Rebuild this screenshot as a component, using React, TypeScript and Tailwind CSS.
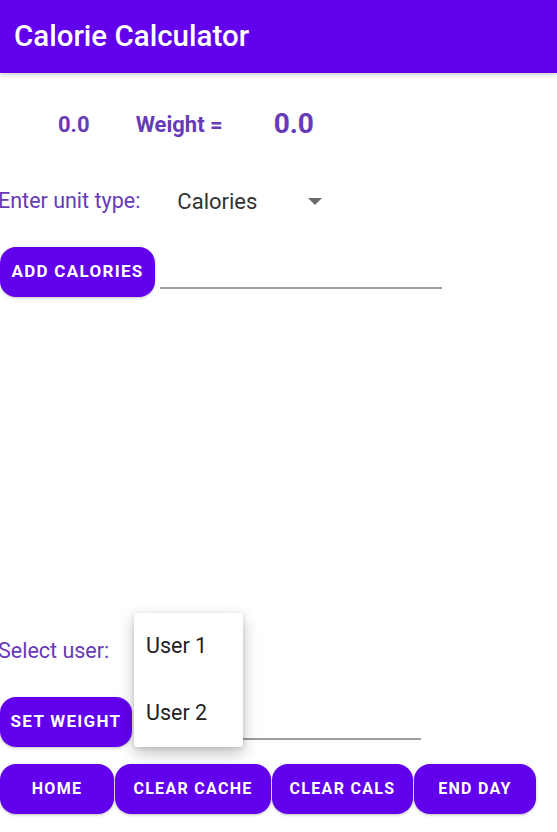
import React from "react";

const font = { fontFamily: "Roboto, 'Noto Sans', sans-serif" };

function PurpleButton({ children, className = "" }: { children: React.ReactNode; className?: string }) {
  return (
    <button
      className={
        "h-[50px] rounded-[16px] bg-[#6200EE] text-white font-bold tracking-[1.3px] uppercase flex items-center justify-center whitespace-nowrap shadow-[0_1px_3px_rgba(0,0,0,0.25)] " +
        className
      }
    >
      {children}
    </button>
  );
}

export default function App() {
  return (
    <div className="w-[557px] h-[832px] bg-white overflow-hidden relative" style={font}>
      <div className="h-[73px] bg-[#6200EE] flex items-center pl-[14px] shadow-[0_2px_4px_rgba(0,0,0,0.18)] relative z-10">
        <span className="text-white text-[29.5px] font-medium">Calorie Calculator</span>
      </div>

      <div className="flex items-center h-[30px] mt-[36px] text-[#673AB7] whitespace-nowrap">
        <span className="ml-[58px] text-[22px] font-bold">0.0</span>
        <span className="ml-[46px] text-[22px] font-bold">Weight =</span>
        <span className="ml-[51px] text-[28px] font-bold">0.0</span>
      </div>

      <div className="flex items-center h-[30px] mt-[47px] whitespace-nowrap">
        <span className="ml-[-2px] text-[21.5px] text-[#673AB7] shrink-0">Enter unit type:</span>
        <span className="ml-[37px] text-[22px] text-[#333333]">Calories</span>
        <svg className="ml-[51px] shrink-0" width="14" height="7" viewBox="0 0 14 7">
          <path d="M0 0 L14 0 L7 7 Z" fill="#6b6b6b" />
        </svg>
      </div>

      <div className="flex items-end mt-[31px]">
        <PurpleButton className="w-[155px] text-[17px]">ADD CALORIES</PurpleButton>
        <div className="ml-[5px] mb-[8px] w-[282px] h-[2px] bg-[#9e9e9e]" />
      </div>

      <div className="flex items-center h-[30px] mt-[339px] whitespace-nowrap">
        <span className="ml-[-2px] text-[21.5px] text-[#673AB7] shrink-0">Select user:</span>
      </div>

      <div className="flex items-end mt-[31px] relative">
        <PurpleButton className="w-[132px] text-[17px]">SET WEIGHT</PurpleButton>
        <div className="ml-[5px] mb-[7px] w-[284px] h-[2px] bg-[#9e9e9e]" />
        <div className="absolute left-[134px] top-[-84px] w-[109px] h-[134px] bg-white rounded-[3px] shadow-[0_6px_16px_rgba(0,0,0,0.25),0_1px_4px_rgba(0,0,0,0.12)] flex flex-col z-20">
          <div className="h-[67px] flex items-center pl-[12px] text-[21.5px] text-[#222]">User 1</div>
          <div className="h-[67px] flex items-center pl-[12px] text-[21.5px] text-[#222]">User 2</div>
        </div>
      </div>

      <div className="flex mt-[17px]">
        <PurpleButton className="w-[114px] text-[16px]">HOME</PurpleButton>
        <PurpleButton className="w-[156px] ml-px text-[16px]">CLEAR CACHE</PurpleButton>
        <PurpleButton className="w-[141px] ml-px text-[16px]">CLEAR CALS</PurpleButton>
        <PurpleButton className="w-[122px] ml-px text-[16px]">END DAY</PurpleButton>
      </div>
    </div>
  );
}
